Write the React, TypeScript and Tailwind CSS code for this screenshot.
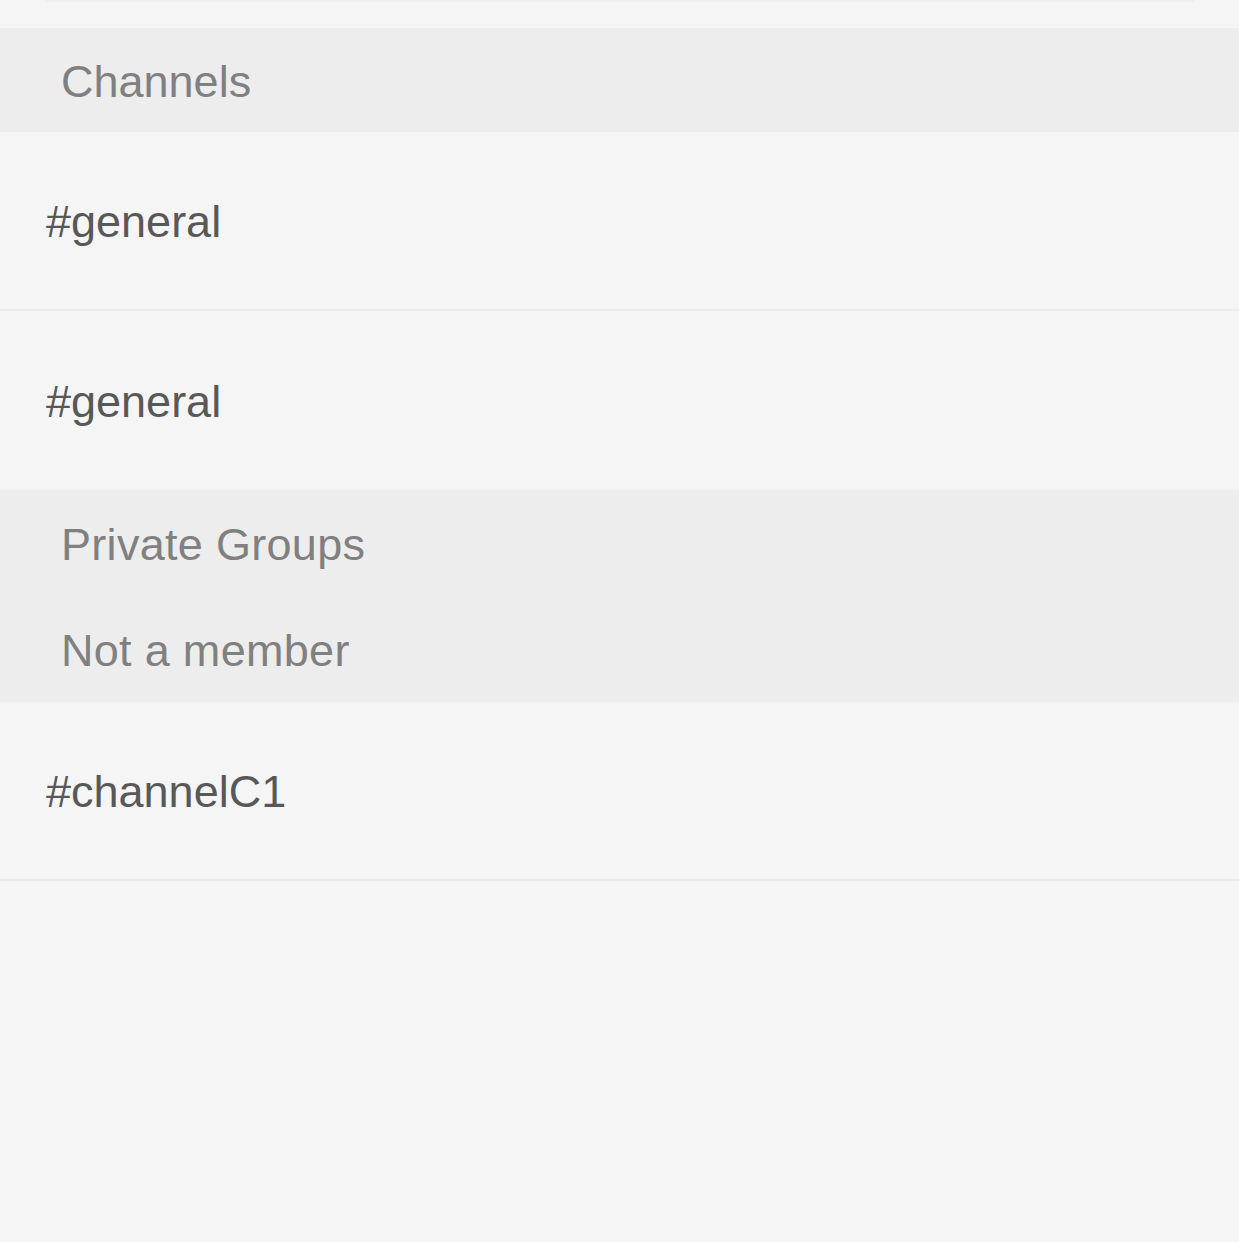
const channels = ['#general', '#general'];
const groups = ['#channelC1'];

function SectionHeader({ label, tall }: { label: string; tall?: boolean }) {
  return (
    <div
      className={
        tall
          ? 'flex h-[106px] items-center pl-[61px] pt-[2px] text-[45px] tracking-[0.3px] text-[#808080]'
          : 'flex h-[104px] items-center pl-[61px] pt-[2px] text-[45px] text-[#808080]'
      }
    >
      {label}
    </div>
  );
}

function ChannelRow({ name, border }: { name: string; border: boolean }) {
  return (
    <div
      className={
        border
          ? 'flex h-[179px] items-center border-b-2 border-[#ebebeb] pl-[46px] pt-[2px] text-[45px] text-[#585858]'
          : 'flex h-[179px] items-center pl-[46px] pt-[2px] text-[45px] text-[#585858]'
      }
    >
      {name}
    </div>
  );
}

export default function App() {
  return (
    <div className="min-h-[1242px] w-full bg-[#f5f5f5] font-['Liberation_Sans',Arial,sans-serif] leading-none">
      {/* bottom edge of the search bar above */}
      <div className="h-[28px] border-b border-[#f8f8f8]">
        <div className="ml-[45px] mr-[44px] h-[3px] bg-gradient-to-b from-[#ececec] to-[#f5f5f5]" />
      </div>

      <div className="bg-[#ededed]">
        <SectionHeader label="Channels" />
      </div>
      {channels.map((name, i) => (
        <ChannelRow key={i} name={name} border={i < channels.length - 1} />
      ))}

      <div className="bg-[#ededed]">
        <SectionHeader label="Private Groups" tall />
        <SectionHeader label="Not a member" tall />
      </div>
      {groups.map((name, i) => (
        <ChannelRow key={i} name={name} border />
      ))}
    </div>
  );
}
